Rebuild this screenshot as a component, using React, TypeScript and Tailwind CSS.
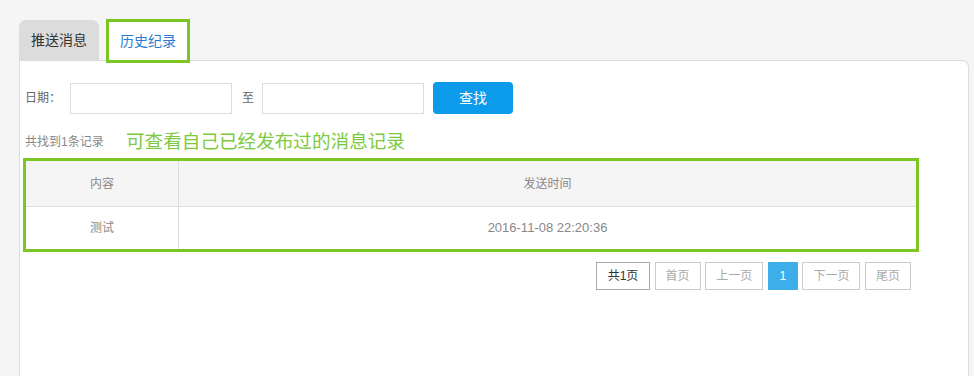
import React from 'react';

const font = { fontFamily: '"Liberation Sans", "Noto Sans CJK SC", sans-serif' };

const pages = [
  { label: '共1页', w: 'w-[54px]', cls: 'border-[#aaa] text-[#333]' },
  { label: '首页', w: 'w-[46px]', cls: 'border-[#ccc] text-[#aaa]' },
  { label: '上一页', w: 'w-[58px]', cls: 'border-[#ccc] text-[#aaa]' },
  { label: '1', w: 'w-[30px]', cls: 'border-[#3daeea] bg-[#3daeea] text-white' },
  { label: '下一页', w: 'w-[58px]', cls: 'border-[#ccc] text-[#aaa]' },
  { label: '尾页', w: 'w-[46px]', cls: 'border-[#ccc] text-[#aaa]' },
];

export default function App() {
  return (
    <div
      className="h-[376px] overflow-hidden bg-[#f5f5f5] pl-[19px] pr-[5px] pt-[20px] flex flex-col"
      style={font}
    >
      {/* tabs */}
      <div className="flex items-start h-[40px]">
        <div className="w-[80px] h-[40px] bg-[#dcdcdc] rounded-t-[7px] flex items-center justify-center text-[14px] text-[#333]">
          推送消息
        </div>
        <div className="relative z-10 ml-[7px] -mt-[1px] w-[84px] h-[44px] bg-white border-[3px] border-[#7cc623] flex items-center justify-center text-[14px] text-[#2a7ad2]">
          历史纪录
        </div>
      </div>

      {/* panel */}
      <div className="flex-1 bg-white border border-[#dcdcdc] border-b-0 rounded-tr-[7px] pl-[5px] pt-[21px]">
        <div className="flex items-center h-[32px]">
          <span className="text-[12px] text-[#666] w-[45px]">日期：</span>
          <div className="w-[162px] h-[31px] border border-[#ddd]" />
          <span className="text-[12px] text-[#666] ml-[10px] w-[20px]">至</span>
          <div className="w-[162px] h-[31px] border border-[#ddd]" />
          <button className="ml-[9px] w-[80px] h-[32px] rounded-[4px] bg-[#0c9beb] text-white text-[14px]">
            查找
          </button>
        </div>

        <div className="flex items-center mt-[16px] h-[24px]">
          <span className="text-[12px] text-[#888] w-[101px]">共找到1条记录</span>
          <span className="text-[18.6px] text-[#7dc940]">可查看自己已经发布过的消息记录</span>
        </div>

        <table className="mt-[4px] ml-[-2px] w-[896px] border-collapse border-[3px] border-[#7cc623] text-[12px] text-[#888]">
          <thead>
            <tr className="h-[47px] bg-[#f5f5f5] border-b border-[#ddd]">
              <th className="w-[154px] font-normal border-r border-[#ddd]">内容</th>
              <th className="font-normal">发送时间</th>
            </tr>
          </thead>
          <tbody>
            <tr className="h-[44px]">
              <td className="text-center border-r border-[#ddd]">测试</td>
              <td className="text-center text-[13px]">2016-11-08 22:20:36</td>
            </tr>
          </tbody>
        </table>

        <div className="flex justify-end gap-[4.6px] w-[886px] mt-[10px]">
          {pages.map((p) => (
            <div
              key={p.label}
              className={`h-[28px] border flex items-center justify-center text-[12px] ${p.w} ${p.cls}`}
            >
              {p.label}
            </div>
          ))}
        </div>
      </div>
    </div>
  );
}
